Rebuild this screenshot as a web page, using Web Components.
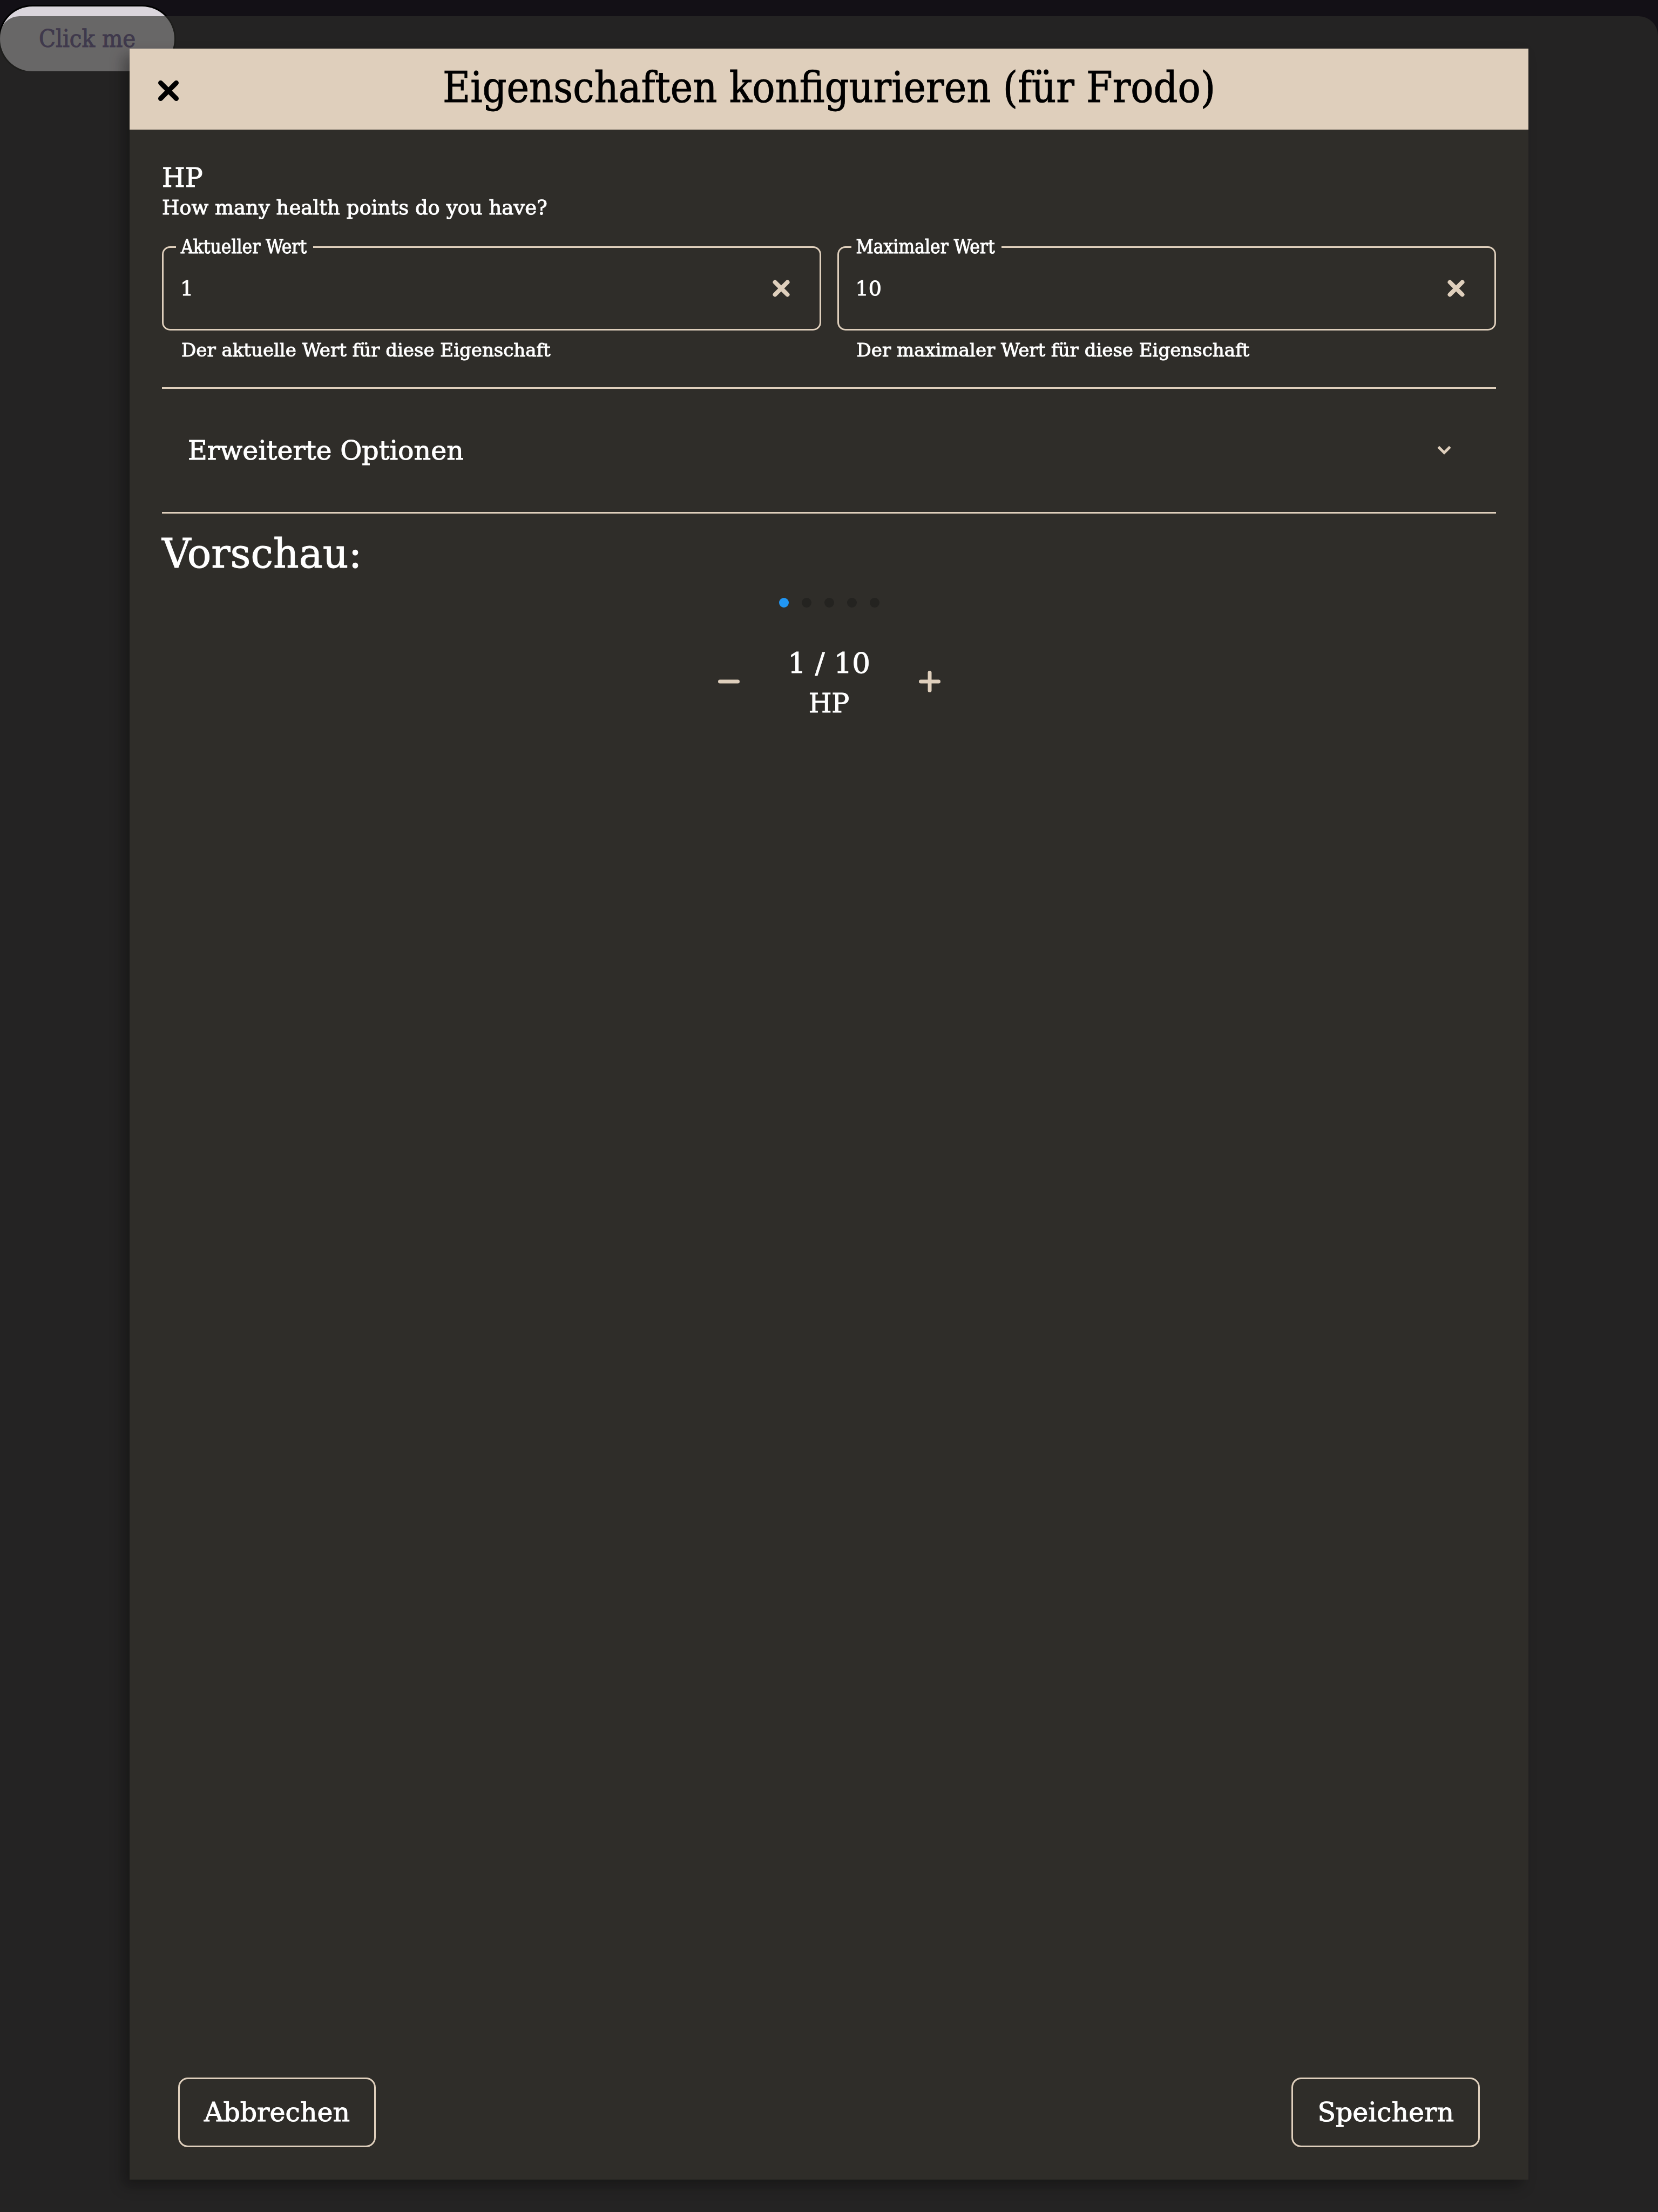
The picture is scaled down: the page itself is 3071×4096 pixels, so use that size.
<!DOCTYPE html>
<html lang="de">
<head>
<meta charset="utf-8">
<title>Eigenschaften konfigurieren</title>
<style>
  html, body { margin: 0; min-height: 100%; }
  body {
    --accent: #dfcfbc;
    --surface: #2f2d29;
    --condensed: "DejaVu Serif Condensed", "DejaVu Serif", serif;
    background: #131016;
    color: #fff;
    font-family: "DejaVu Serif", serif;
    font-size: 38px;
    -webkit-text-stroke: 1px currentColor;
  }
</style>
</head>
<body>
<launch-button>Click me</launch-button>
<modal-dialog heading="Eigenschaften konfigurieren (für Frodo)">
  <stat-heading name="HP">How many health points do you have?</stat-heading>
  <field-row>
    <number-field label="Aktueller Wert" value="1" helper="Der aktuelle Wert für diese Eigenschaft"></number-field>
    <number-field label="Maximaler Wert" value="10" helper="Der maximaler Wert für diese Eigenschaft"></number-field>
  </field-row>
  <option-accordion>Erweiterte Optionen</option-accordion>
  <stat-preview heading="Vorschau:" name="HP" value="1" max="10"></stat-preview>
  <outline-button slot="actions">Abbrechen</outline-button>
  <outline-button slot="actions">Speichern</outline-button>
</modal-dialog>

<script>
const RESET = `
  *, *::before, *::after { box-sizing: border-box; }
  button { margin: 0; padding: 0; border: 0; background: none; color: inherit; font: inherit; cursor: pointer; }
  h1, h2, h3, p { margin: 0; font-weight: 400; }
  svg { display: block; fill: none; stroke: currentColor; stroke-linecap: round; }
`;

class BaseElement extends HTMLElement {
  connectedCallback() {
    if (this.shadowRoot) return;
    const root = this.attachShadow({ mode: "open" });
    root.innerHTML = `<style>${RESET}${this.styles()}</style>${this.markup()}`;
  }
  attr(name) { return this.getAttribute(name) || ""; }
}

customElements.define("launch-button", class extends BaseElement {
  styles() { return `
    :host { display: block; padding-top: 12px; }
    button {
      display: block; height: 120px; padding: 0 72px; border-radius: 60px;
      background: #dad5dc; color: #624f8c; box-shadow: 0 0 0 3px #000;
      font: 45px/120px var(--condensed);
    }`; }
  markup() { return `<button type="button"><slot></slot></button>`; }
});

customElements.define("modal-dialog", class extends BaseElement {
  styles() { return `
    :host {
      position: fixed; inset: 30px 0 0 0; display: flex; padding: 60px 240px;
      background: rgba(45, 46, 43, .66); border-radius: 36px 36px 0 0;
    }
    section {
      flex: 1; display: flex; flex-direction: column;
      background: var(--surface); box-shadow: -12px 12px 24px rgba(0, 0, 0, .33);
    }
    header {
      display: grid; grid-template-columns: 144px 1fr 144px; align-items: start;
      height: 150px; background: var(--accent); color: #000;
    }
    header button { display: grid; place-items: center; height: 150px; padding-top: 6px; }
    h1 { font: 78px/144px var(--condensed); text-align: center; white-space: nowrap; }
    main { flex: 1; padding: 60px 60px 0; }
    footer { display: flex; justify-content: space-between; padding: 0 90px 60px; }`; }
  markup() { return `
    <section role="dialog" aria-labelledby="title">
      <header>
        <button type="button" aria-label="Schließen">
          <svg width="40" height="40" viewBox="0 0 40 40" stroke-width="9"><path d="M5.5 5.5 34.5 34.5M34.5 5.5 5.5 34.5"/></svg>
        </button>
        <h1 id="title">${this.attr("heading")}</h1>
      </header>
      <main><slot></slot></main>
      <footer><slot name="actions"></slot></footer>
    </section>`; }
});

customElements.define("stat-heading", class extends BaseElement {
  styles() { return `
    :host { display: block; }
    h2 { font-size: 49px; line-height: 60px; }
    p { font-size: 37px; line-height: 50px; }`; }
  markup() { return `<h2>${this.attr("name")}</h2><p><slot></slot></p>`; }
});

customElements.define("field-row", class extends BaseElement {
  styles() { return `
    :host { display: grid; grid-template-columns: 1fr 1fr; gap: 30px; padding: 28px 0 45px; border-bottom: 3px solid var(--accent); }`; }
  markup() { return `<slot></slot>`; }
});

customElements.define("number-field", class extends BaseElement {
  styles() { return `
    :host { display: block; min-width: 0; }
    fieldset { margin: 0; padding: 0 23px 18px; border: 3px solid var(--accent); border-radius: 15px; }
    legend { padding: 0 12px 0 9px; font: 35px/39px var(--condensed); }
    .row { display: flex; align-items: center; height: 114px; padding-left: 8px; }
    input {
      flex: 1; min-width: 0; height: 100%; margin: 0; padding: 0; border: 0; outline: 0;
      background: none; color: inherit; font: inherit;
    }
    button { display: grid; place-items: center; width: 96px; height: 96px; color: var(--accent); }
    p { margin-top: 12px; padding-left: 36px; font-size: 34px; line-height: 48px; }`; }
  markup() { return `
    <fieldset>
      <legend><label for="field">${this.attr("label")}</label></legend>
      <div class="row">
        <input id="field" type="text" inputmode="numeric" aria-describedby="helper" value="${this.attr("value")}">
        <button type="button" aria-label="Feld leeren">
          <svg width="34" height="34" viewBox="0 0 34 34" stroke-width="8"><path d="M5.5 5.5 28.5 28.5M28.5 5.5 5.5 28.5"/></svg>
        </button>
      </div>
    </fieldset>
    <p id="helper">${this.attr("helper")}</p>`; }
});

customElements.define("option-accordion", class extends BaseElement {
  styles() { return `
    :host { display: block; border-bottom: 3px solid var(--accent); }
    button {
      display: flex; align-items: center; justify-content: space-between;
      width: 100%; height: 228px; padding: 0 82px 0 48px; font-size: 49px;
    }
    svg { color: var(--accent); stroke-linecap: butt; }`; }
  markup() { return `
    <button type="button" aria-expanded="false">
      <span><slot></slot></span>
      <svg width="28" height="18" viewBox="0 0 28 18" stroke-width="5"><path d="M3.2 2.5 14 13.3 24.8 2.5"/></svg>
    </button>`; }
});

customElements.define("stat-preview", class extends BaseElement {
  styles() { return `
    :host { display: block; padding-top: 24px; }
    h2 { font-size: 74px; line-height: 100px; }
    .dots { display: flex; justify-content: center; gap: 24px; margin-top: 32px; }
    .dots i { width: 18px; height: 18px; border-radius: 50%; background: #242320; }
    .dots i.on { background: #2196f3; }
    .counter { display: flex; align-items: center; justify-content: center; margin-top: 62px; text-align: center; }
    .counter div { width: 252px; }
    .value { font-size: 53px; line-height: 82px; }
    .name { font-size: 49px; line-height: 68px; }
    button { display: grid; place-items: center; width: 120px; height: 120px; color: var(--accent); }`; }
  markup() { return `
    <h2>${this.attr("heading")}</h2>
    <div class="dots"><i class="on"></i><i></i><i></i><i></i><i></i></div>
    <div class="counter">
      <button type="button" aria-label="Weniger">
        <svg width="40" height="40" viewBox="0 0 40 40" stroke-width="7"><path d="M3.5 20H36.5"/></svg>
      </button>
      <div>
        <p class="value">${this.attr("value")} / ${this.attr("max")}</p>
        <p class="name">${this.attr("name")}</p>
      </div>
      <button type="button" aria-label="Mehr">
        <svg width="40" height="40" viewBox="0 0 40 40" stroke-width="7"><path d="M3.5 20H36.5M20 3.5V36.5"/></svg>
      </button>
    </div>`; }
});

customElements.define("outline-button", class extends BaseElement {
  styles() { return `
    :host { display: block; }
    button {
      display: block; height: 129px; padding: 0 45px; border: 3px solid var(--accent); border-radius: 18px;
      font-size: 49px; line-height: 120px;
    }`; }
  markup() { return `<button type="button"><slot></slot></button>`; }
});
</script>
</body>
</html>
